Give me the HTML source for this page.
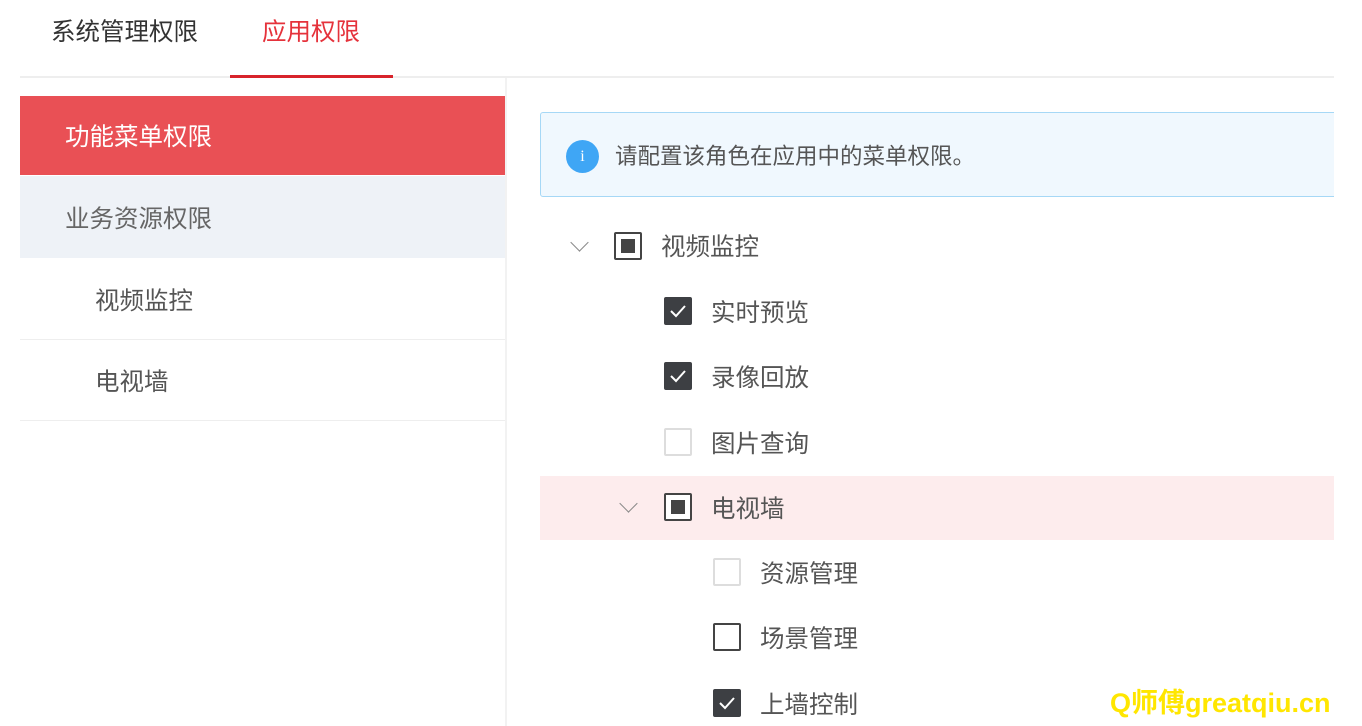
<!DOCTYPE html>
<html><head><meta charset="utf-8"><style>
*{margin:0;padding:0;box-sizing:border-box}
body{width:1362px;height:726px;overflow:hidden;background:#fff;font-family:"Liberation Sans","Noto Sans CJK SC",sans-serif;color:#555;position:relative}
.a{position:absolute}
.t{font-size:24.5px;line-height:1;white-space:nowrap}
.cb{position:absolute;width:28px;height:28px;border-radius:2px}
.full{background:#3d3f43;border:2px solid #3d3f43}
.empty{border:2px solid #ddd;background:#fff}
.empty2{border:2px solid #444;background:#fff}
.half{border:2px solid #444;background:#fff}
.half:after{content:"";position:absolute;left:5px;top:5px;width:14px;height:14px;background:#444}
.chev{position:absolute;width:13px;height:13px;border-right:1.5px solid #888;border-bottom:1.5px solid #888;transform:rotate(45deg)}
</style></head><body>
<div class="a t" style="left:51px;top:21px;color:#333">系统管理权限</div>
<div class="a t" style="left:262px;top:21px;color:#e5323b">应用权限</div>
<div class="a" style="left:20px;top:76px;width:1314px;height:2px;background:#eee"></div>
<div class="a" style="left:230px;top:75px;width:163px;height:3px;background:#d8232b"></div>
<div class="a" style="left:505px;top:78px;width:2px;height:648px;background:#f2f2f2"></div>
<div class="a" style="left:20px;top:96px;width:485px;height:79px;background:#e95055"></div>
<div class="a t" style="left:65px;top:126px;color:#fff">功能菜单权限</div>
<div class="a" style="left:20px;top:176px;width:485px;height:82px;background:#eef2f7"></div>
<div class="a t" style="left:65px;top:208px;color:#666">业务资源权限</div>
<div class="a t" style="left:95px;top:290px;color:#555">视频监控</div>
<div class="a" style="left:20px;top:339px;width:485px;height:1px;background:#eee"></div>
<div class="a t" style="left:95px;top:371px;color:#555">电视墙</div>
<div class="a" style="left:20px;top:420px;width:485px;height:1px;background:#eee"></div>

<div class="a" style="left:540px;top:112px;width:794px;height:85px;overflow:hidden"><div style="width:810px;height:85px;background:#f0f8fe;border:1.5px solid #a6d8f6;border-radius:3px"></div></div>
<div class="a" style="left:566px;top:140px;width:33px;height:33px;border-radius:50%;background:#3fa6f5;color:#fff;font-size:16px;text-align:center;line-height:33px;font-family:'Liberation Serif',serif">i</div>
<div class="a" style="left:615px;top:146px;font-size:22.5px;line-height:1;color:#555;white-space:nowrap">请配置该角色在应用中的菜单权限。</div>

<div class="a" style="left:540px;top:476px;width:794px;height:64px;background:#fdeced"></div>

<div class="chev" style="left:573px;top:236px"></div>
<div class="cb half" style="left:614px;top:232px"></div>
<div class="a t" style="left:661px;top:236px">视频监控</div>

<div class="cb full" style="left:664px;top:297px"><svg width="24" height="24" style="position:absolute;left:0;top:0"><path d="M5 12 L10 17 L19 7" stroke="#fff" stroke-width="2" fill="none"/></svg></div>
<div class="a t" style="left:711px;top:302px">实时预览</div>
<div class="cb full" style="left:664px;top:362px"><svg width="24" height="24" style="position:absolute;left:0;top:0"><path d="M5 12 L10 17 L19 7" stroke="#fff" stroke-width="2" fill="none"/></svg></div>
<div class="a t" style="left:711px;top:367px">录像回放</div>
<div class="cb empty" style="left:664px;top:428px"></div>
<div class="a t" style="left:711px;top:433px">图片查询</div>

<div class="chev" style="left:622px;top:497px"></div>
<div class="cb half" style="left:664px;top:493px"></div>
<div class="a t" style="left:711px;top:498px">电视墙</div>

<div class="cb empty" style="left:713px;top:558px"></div>
<div class="a t" style="left:760px;top:563px">资源管理</div>
<div class="cb empty2" style="left:713px;top:623px"></div>
<div class="a t" style="left:760px;top:628px">场景管理</div>
<div class="cb full" style="left:713px;top:689px"><svg width="24" height="24" style="position:absolute;left:0;top:0"><path d="M5 12 L10 17 L19 7" stroke="#fff" stroke-width="2" fill="none"/></svg></div>
<div class="a t" style="left:760px;top:694px">上墙控制</div>

<div class="a" style="left:1110px;top:681px;font-size:27px;font-weight:bold;color:#ffe600;white-space:nowrap">Q师傅greatqiu.cn</div>
</body></html>
